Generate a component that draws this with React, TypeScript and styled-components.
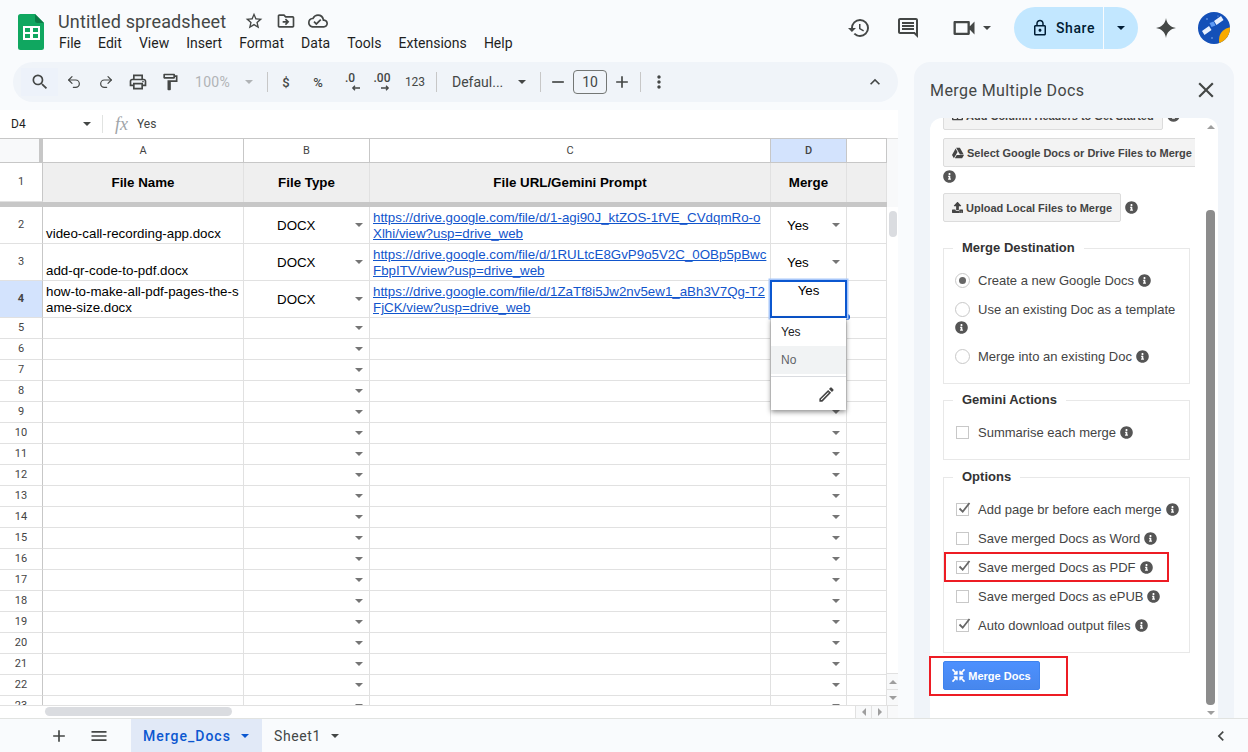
import React from "react";
import styled, { createGlobalStyle } from "styled-components";
import {
  MdAdd,
  MdChevronLeft,
  MdClose,
  MdExpandLess,
  MdHistory,
  MdMenu,
  MdMoreVert,
  MdOutlineCloudDone,
  MdOutlineComment,
  MdOutlineDriveFileMove,
  MdOutlineEdit,
  MdOutlineFormatPaint,
  MdOutlineLock,
  MdOutlinePrint,
  MdOutlineVideocam,
  MdRemove,
  MdSearch,
  MdStarBorder,
} from "react-icons/md";
import { FaCompressArrowsAlt, FaGoogleDrive, FaInfoCircle, FaTable, FaUpload } from "react-icons/fa";
import { Redo2, Undo2 } from "lucide-react";

const GlobalStyle = createGlobalStyle`
  html, body {
    margin: 0;
    padding: 0;
    overflow: hidden;
    background: #f9fbfd;
  }
  * {
    box-sizing: border-box;
  }
`;

const UI_FONT = `Roboto, "Noto Sans", sans-serif`;
const CELL_FONT = `"Liberation Sans", Arial, sans-serif`;

const Page = styled.div`
  position: relative;
  width: 1248px;
  height: 752px;
  display: flex;
  flex-direction: column;
  background: #f9fbfd;
  color: #444746;
  font-family: ${UI_FONT};
`;

/* top bar */
const Header = styled.header`
  height: 62px;
  display: flex;
  align-items: flex-start;
  padding-left: 18px;
`;

const Logo = styled.svg`
  width: 26px;
  height: 36px;
  margin-top: 14px;
`;

const TitleBlock = styled.div`
  margin-left: 14px;
  padding-top: 10px;
`;

const TitleRow = styled.div`
  display: flex;
  align-items: center;
  height: 22px;
  color: #444746;
  font-size: 18px;
  letter-spacing: 0.15px;
`;

const TitleText = styled.span`
  width: 169px;
  white-space: nowrap;
`;

const TitleIcons = styled.div`
  display: flex;
  gap: 12px;
  margin-left: 17px;
  font-size: 20px;
`;

const MenuBar = styled.nav`
  display: flex;
  gap: 17.1px;
  margin: 1px 0 0 1px;
  font-size: 14px;
  line-height: 20px;
  color: #1f1f1f;
`;

const HeaderActions = styled.div`
  margin-left: auto;
  display: flex;
  align-items: center;
  height: 42px;
  margin-top: 7px;
  padding-right: 18px;
`;

const ActionIcon = styled.span<{ $ml?: number; $size?: number }>`
  display: flex;
  font-size: ${(p) => p.$size ?? 24}px;
  margin-left: ${(p) => p.$ml ?? 0}px;
  color: #444746;
`;

const Caret = styled.span<{ $color?: string; $size?: number; $ml?: number; $mr?: number; $auto?: boolean }>`
  flex: none;
  width: 0;
  height: 0;
  border-left: ${(p) => p.$size ?? 4}px solid transparent;
  border-right: ${(p) => p.$size ?? 4}px solid transparent;
  border-top: ${(p) => p.$size ?? 4}px solid ${(p) => p.$color ?? "#444746"};
  margin-left: ${(p) => (p.$auto ? "auto" : `${p.$ml ?? 0}px`)};
  margin-right: ${(p) => p.$mr ?? 0}px;
`;

const ShareGroup = styled.div`
  display: flex;
  height: 42px;
  width: 124px;
  margin-left: 23px;
  border-radius: 21px;
  overflow: hidden;
  background: #c2e7ff;
  color: #001d35;
`;

const ShareMain = styled.div`
  width: 90px;
  display: flex;
  align-items: center;
  padding-left: 17px;
  gap: 7px;
  font-size: 14px;
  font-weight: 500;
  letter-spacing: 0.6px;
  border-right: 1px solid #f9fbfd;
`;

const ShareDrop = styled.div`
  flex: 1;
  display: flex;
  align-items: center;
  justify-content: center;
`;

const Avatar = styled.svg`
  width: 32px;
  height: 32px;
  margin-left: 20px;
`;

/* main area */
const Main = styled.main`
  flex: 1;
  min-height: 0;
  display: flex;
`;

const SheetColumn = styled.section`
  width: 898px;
  display: flex;
  flex-direction: column;
`;

const Toolbar = styled.div`
  height: 40px;
  margin-left: 13px;
  padding: 0 13px 0 8px;
  display: flex;
  align-items: center;
  border-radius: 20px;
  background: #f0f4f9;
  color: #444746;
`;

const ToolButton = styled.div<{ $w?: number; $active?: boolean }>`
  flex: none;
  width: ${(p) => p.$w ?? 32}px;
  height: 28px;
  display: flex;
  align-items: center;
  justify-content: center;
  font-size: 20px;
  background: ${(p) => (p.$active ? "#edf2fa" : "transparent")};
`;

const ToolText = styled.span<{ $size?: number; $weight?: number }>`
  font-family: ${UI_FONT};
  font-size: ${(p) => p.$size ?? 13}px;
  font-weight: ${(p) => p.$weight ?? 400};
`;

const ZoomGroup = styled.div`
  flex: none;
  width: 72px;
  padding-left: 9px;
  display: flex;
  align-items: center;
  color: #b0b3b6;
  font-size: 14px;
  letter-spacing: 0.3px;
`;

const FontGroup = styled.div`
  flex: none;
  width: 88px;
  margin-left: 15px;
  display: flex;
  align-items: center;
  font-size: 14px;
`;

const FontName = styled.span`
  width: 62px;
  white-space: nowrap;
`;

const Divider = styled.span<{ $ml?: number; $mr?: number }>`
  flex: none;
  width: 1px;
  height: 20px;
  background: #c7c7c7;
  margin-left: ${(p) => p.$ml ?? 0}px;
  margin-right: ${(p) => p.$mr ?? 0}px;
`;

const SizeInput = styled.div`
  flex: none;
  width: 34px;
  height: 24px;
  display: flex;
  align-items: center;
  justify-content: center;
  border: 1px solid #747775;
  border-radius: 4px;
  font-size: 14px;
`;

const DecimalStack = styled.span`
  display: flex;
  flex-direction: column;
  align-items: flex-end;
  line-height: 11px;
  font-size: 12px;
  font-weight: 500;
`;

const DecimalArrow = styled.svg<{ $mr?: number }>`
  width: 10px;
  height: 6px;
  margin-top: 1px;
  margin-right: ${(p) => p.$mr ?? 0}px;
`;

const ToolbarEnd = styled.div`
  margin-left: auto;
  display: flex;
  font-size: 20px;
`;

const FormulaBar = styled.div`
  height: 28px;
  margin-top: 8px;
  display: flex;
  align-items: center;
  background: #fff;
  font-size: 12px;
`;

const NameBox = styled.div`
  width: 103px;
  padding: 0 11px 0 11px;
  display: flex;
  align-items: center;
  justify-content: space-between;
  border-right: 1px solid #e1e3e1;
  height: 18px;
  color: #1f1f1f;
`;

const FxMark = styled.span`
  width: 34px;
  padding-left: 12px;
  font-family: "Liberation Serif", serif;
  font-style: italic;
  font-size: 18px;
  color: #a0a4a8;
`;

const GridFrame = styled.div`
  flex: 1;
  min-height: 0;
  display: flex;
  background: #fff;
`;

const GridBody = styled.div`
  width: 887px;
  height: 567px;
  overflow: hidden;
  border-top: 1px solid #c7c7c7;
`;

const GridRow = styled.div<{ $h: number }>`
  display: grid;
  grid-template-columns: 43px 201px 126px 401px 76px 40px;
  height: ${(p) => p.$h}px;
`;

const Cell = styled.div`
  position: relative;
  min-width: 0;
  display: flex;
  border-right: 1px solid #e1e1e1;
  border-bottom: 1px solid #e1e1e1;
  font-family: ${CELL_FONT};
  font-size: 13.33px;
  line-height: 16px;
  color: #000;
`;

const Corner = styled.div`
  background: #f8f9fa;
  border-right: 4px solid #c7c7c7;
  border-bottom: 1px solid #c7c7c7;
`;

const ColHead = styled(Cell)<{ $active?: boolean }>`
  align-items: center;
  justify-content: center;
  font-family: ${UI_FONT};
  font-size: 11px;
  color: #444;
  border-right-color: #c7c7c7;
  border-bottom-color: #c7c7c7;
  background: ${(p) => (p.$active ? "#d3e3fd" : "#fff")};
  font-weight: ${(p) => (p.$active ? 500 : 400)};
`;

const RowHead = styled(Cell)<{ $active?: boolean }>`
  align-items: center;
  justify-content: center;
  font-family: ${UI_FONT};
  font-size: 11px;
  color: #444;
  border-right-color: #c7c7c7;
  background: ${(p) => (p.$active ? "#d3e3fd" : "#fff")};
  font-weight: ${(p) => (p.$active ? 700 : 400)};
`;

const TitleCell = styled(Cell)`
  align-items: center;
  justify-content: center;
  background: #efefef;
  border-bottom: none;
  font-weight: 700;
`;

const FreezeBand = styled.div`
  height: 5px;
  background: #c7c7c7;
`;

const NameCell = styled(Cell)<{ $top?: boolean }>`
  align-items: ${(p) => (p.$top ? "flex-start" : "flex-end")};
  padding: ${(p) => (p.$top ? "3px" : "0")} 2px 1px 3px;
  word-break: break-all;
`;

const ChipCell = styled(Cell)<{ $pad?: number }>`
  align-items: center;
  padding-left: ${(p) => p.$pad ?? 0}px;
`;

const ChipText = styled.span`
  padding-top: 2px;
`;

const LinkCell = styled(Cell)`
  display: block;
  padding: 3px 3px 0;
  white-space: nowrap;
`;

const SheetLink = styled.a`
  display: block;
  color: #1155cc;
  text-decoration: underline;
`;

const SelectedBox = styled.div`
  position: absolute;
  z-index: 3;
  left: -1px;
  top: -1px;
  width: 77px;
  height: 38px;
  padding-top: 1px;
  text-align: center;
  background: #fff;
  border: 2px solid #0b57d0;
  box-shadow: 0 0 0 1.5px #a8c7fa;
`;

const FillHandle = styled.span`
  position: absolute;
  z-index: 2;
  right: -4px;
  bottom: -3px;
  width: 6px;
  height: 6px;
  border-radius: 50%;
  background: #0b57d0;
`;

const DropMenu = styled.div`
  position: absolute;
  z-index: 4;
  left: 0;
  top: 37px;
  width: 75px;
  height: 92px;
  background: #fff;
  font-size: 12px;
  box-shadow: 0 2px 5px rgba(0, 0, 0, 0.45);
`;

const DropItem = styled.div<{ $hover?: boolean }>`
  height: 28px;
  padding-left: 10px;
  display: flex;
  align-items: center;
  color: ${(p) => (p.$hover ? "#5f6368" : "#202124")};
  background: ${(p) => (p.$hover ? "#f1f3f4" : "#fff")};
`;

const DropFoot = styled.div`
  margin-top: 2px;
  height: 34px;
  padding: 2px 10px 0 0;
  display: flex;
  align-items: center;
  justify-content: flex-end;
  border-top: 1px solid #dadce0;
  font-size: 19px;
  color: #444;
`;

const VScroll = styled.div`
  width: 11px;
  display: flex;
  flex-direction: column;
  border-top: 1px solid #e1e1e1;
`;

const VScrollHead = styled.div`
  height: 68px;
  background: #f8f9fa;
`;

const VThumb = styled.div`
  margin: 4px 0 0 2px;
  width: 8px;
  height: 26px;
  border-radius: 4px;
  background: #dadce0;
`;

const VArrows = styled.div`
  margin-top: auto;
  display: flex;
  flex-direction: column;
`;

const ScrollStep = styled.div`
  height: 16px;
  display: flex;
  align-items: center;
  justify-content: center;
  background: #f8f9fa;
  border-top: 1px solid #e1e1e1;
`;

const ArrowUp = styled.span<{ $color?: string; $size?: number }>`
  width: 0;
  height: 0;
  border-left: ${(p) => p.$size ?? 4}px solid transparent;
  border-right: ${(p) => p.$size ?? 4}px solid transparent;
  border-bottom: ${(p) => p.$size ?? 4}px solid ${(p) => p.$color ?? "#9e9e9e"};
`;

const ArrowSide = styled.span<{ $dir: "left" | "right" }>`
  width: 0;
  height: 0;
  border-top: 4px solid transparent;
  border-bottom: 4px solid transparent;
  ${(p) => (p.$dir === "left" ? "border-right" : "border-left")}: 4px solid #9e9e9e;
`;

const HScroll = styled.div`
  height: 13px;
  display: flex;
  align-items: stretch;
  background: #fff;
  border-top: 1px solid #e1e1e1;
`;

const HThumb = styled.div`
  width: 187px;
  height: 9px;
  margin: 1px 0 0 45px;
  border-radius: 5px;
  background: #dadce0;
`;

const HStep = styled.div<{ $first?: boolean }>`
  width: 16px;
  margin-left: ${(p) => (p.$first ? "auto" : "0")};
  display: flex;
  align-items: center;
  justify-content: center;
  background: #f8f9fa;
  border-left: 1px solid #e1e1e1;
`;

const HCorner = styled.div`
  width: 11px;
  background: #f8f9fa;
  border-left: 1px solid #e1e1e1;
`;

/* add-on panel */
const SidePanel = styled.aside`
  width: 320px;
  margin: 0 14px 0 16px;
  padding: 0 16px;
  display: flex;
  flex-direction: column;
  border-radius: 16px 16px 0 0;
  background: #f0f4f9;
`;

const PanelHead = styled.div`
  height: 56px;
  display: flex;
  align-items: center;
  justify-content: space-between;
  font-size: 16px;
  letter-spacing: 0.42px;
  color: #444746;
`;

const CloseButton = styled.span`
  display: flex;
  font-size: 26px;
  margin-right: -1px;
`;

const PanelBody = styled.div`
  flex: 1;
  min-height: 0;
  display: flex;
  padding-right: 3px;
  border-radius: 12px 12px 0 0;
  background: #fff;
  overflow: hidden;
`;

const PanelContent = styled.div`
  width: 265px;
  margin-right: 11px;
  margin-top: -17px;
  padding-left: 13px;
  overflow: hidden;
  font-family: ${CELL_FONT};
  font-size: 13px;
  color: #444;
`;

const ButtonRow = styled.div`
  display: flex;
  align-items: center;
  white-space: nowrap;
  margin-bottom: 8px;
`;

const AddonButton = styled.div`
  flex: none;
  height: 29px;
  padding: 0 8px;
  display: flex;
  align-items: center;
  gap: 3px;
  border: 1px solid #dcdcdc;
  border-radius: 2px;
  background: #f3f3f3;
  font-size: 11px;
  font-weight: 700;
  color: #444;
`;

const InfoIcon = styled(FaInfoCircle)<{ $ml?: number }>`
  flex: none;
  width: 13px;
  height: 13px;
  color: #555;
  margin-left: ${(p) => p.$ml ?? 4}px;
`;

const WrappedInfo = styled.div<{ $top: number; $bottom: number }>`
  display: flex;
  height: 14px;
  margin: ${(p) => p.$top}px 0 ${(p) => p.$bottom}px;
`;

const Group = styled.fieldset<{ $h: number; $mt: number }>`
  width: 247px;
  height: ${(p) => p.$h}px;
  margin: ${(p) => p.$mt}px 0 0;
  padding: 11px 0 0 11px;
  border: 1px solid #e8e8e8;
  min-inline-size: 0;
`;

const GroupTitle = styled.legend`
  margin-left: -2px;
  padding: 0 9px;
  font-size: 13px;
  line-height: 14px;
  font-weight: 700;
  color: #333;
`;

const OptionRow = styled.div`
  display: flex;
  align-items: center;
  height: 29px;
  white-space: nowrap;
`;

const RadioMark = styled.span<{ $on?: boolean }>`
  flex: none;
  width: 15px;
  height: 15px;
  margin-right: 8px;
  display: flex;
  align-items: center;
  justify-content: center;
  border: 1px solid #c8c8c8;
  border-radius: 50%;
  &::after {
    content: "";
    width: 7px;
    height: 7px;
    border-radius: 50%;
    background: ${(p) => (p.$on ? "#666" : "transparent")};
  }
`;

const CheckMark = styled.span`
  flex: none;
  position: relative;
  width: 13px;
  height: 13px;
  margin: 0 9px 0 1px;
  border: 1px solid #c8c8c8;
`;

const CheckTick = styled.svg`
  position: absolute;
  left: 0;
  top: -4px;
  width: 15px;
  height: 15px;
`;

const MergeRow = styled.div`
  margin-top: 8px;
`;

const MergeButton = styled.div`
  width: 97px;
  height: 29px;
  display: flex;
  align-items: center;
  justify-content: center;
  gap: 3px;
  border: 1px solid #3f83ee;
  border-radius: 2px;
  background: linear-gradient(#4d90fe, #4787ed);
  color: #fff;
  font-size: 11px;
  font-weight: 700;
`;

const RedBox = styled.div<{ $x: number; $y: number; $w: number; $h: number }>`
  position: absolute;
  left: ${(p) => p.$x}px;
  top: ${(p) => p.$y}px;
  width: ${(p) => p.$w}px;
  height: ${(p) => p.$h}px;
  border: 2px solid #ed1c24;
  pointer-events: none;
`;

const PanelScroll = styled.div`
  width: 9px;
  display: flex;
  flex-direction: column;
  align-items: center;
`;

const PanelArrowTop = styled.div`
  display: flex;
  height: 4px;
  margin-top: 7px;
`;

const PanelThumb = styled.div`
  width: 9px;
  height: 495px;
  margin-top: 81px;
  border-radius: 4px;
  background: #8c8c8c;
`;

const PanelArrowBottom = styled.span`
  margin-top: 6px;
  width: 0;
  height: 0;
  border-left: 4px solid transparent;
  border-right: 4px solid transparent;
  border-top: 4px solid #9e9e9e;
`;

/* footer */
const Footer = styled.footer`
  height: 34px;
  display: flex;
  align-items: center;
  padding-left: 49px;
  border-top: 1px solid #e1e3e1;
  font-size: 14px;
`;

const FooterIcon = styled.span<{ $ml?: number }>`
  display: flex;
  font-size: 20px;
  margin-left: ${(p) => p.$ml ?? 0}px;
`;

const SheetTab = styled.div<{ $active?: boolean; $w: number; $ml?: number }>`
  width: ${(p) => p.$w}px;
  height: 33px;
  margin-left: ${(p) => p.$ml ?? 0}px;
  padding-left: 12px;
  display: flex;
  align-items: center;
  letter-spacing: ${(p) => (p.$active ? 1 : 0.6)}px;
  font-weight: ${(p) => (p.$active ? 500 : 400)};
  color: ${(p) => (p.$active ? "#0b57d0" : "#444746")};
  background: ${(p) => (p.$active ? "#e1e9f7" : "transparent")};
`;

const FooterEnd = styled.span`
  margin-left: auto;
  margin-right: 17px;
  display: flex;
  font-size: 20px;
`;

type DataRow = {
  n: number;
  name: string;
  url: [string, string];
  merge: string;
  selected?: boolean;
};

const rows: DataRow[] = [
  {
    n: 2,
    name: "video-call-recording-app.docx",
    url: ["https://drive.google.com/file/d/1-agi90J_ktZOS-1fVE_CVdqmRo-o", "Xlhi/view?usp=drive_web"],
    merge: "Yes",
  },
  {
    n: 3,
    name: "add-qr-code-to-pdf.docx",
    url: ["https://drive.google.com/file/d/1RULtcE8GvP9o5V2C_0OBp5pBwc", "FbpITV/view?usp=drive_web"],
    merge: "Yes",
  },
  {
    n: 4,
    name: "how-to-make-all-pdf-pages-the-same-size.docx",
    url: ["https://drive.google.com/file/d/1ZaTf8i5Jw2nv5ew1_aBh3V7Qg-T2", "FjCK/view?usp=drive_web"],
    merge: "Yes",
    selected: true,
  },
];

const emptyRows = Array.from({ length: 19 }, (_, i) => i + 5);
const menus = ["File", "Edit", "View", "Insert", "Format", "Data", "Tools", "Extensions", "Help"];

const Info = ({ ml }: { ml?: number }) => <InfoIcon $ml={ml} />;

const Radio = ({ on, label, info = true }: { on?: boolean; label: string; info?: boolean }) => (
  <OptionRow>
    <RadioMark $on={on} />
    {label}
    {info && <Info />}
  </OptionRow>
);

const Check = ({ on, label }: { on?: boolean; label: string }) => (
  <OptionRow>
    <CheckMark>
      {on && (
        <CheckTick viewBox="0 0 15 15">
          <path d="M2.5 8.5l3.2 3.2L12.5 3" fill="none" stroke="#666" strokeWidth="1.8" />
        </CheckTick>
      )}
    </CheckMark>
    {label}
    <Info />
  </OptionRow>
);

const SheetsLogo = () => (
  <Logo viewBox="0 0 26 36">
    <path d="M2.5 0H17l9 9v24.5a2.5 2.5 0 0 1-2.5 2.5h-21A2.5 2.5 0 0 1 0 33.5v-31A2.5 2.5 0 0 1 2.5 0z" fill="#10a760" />
    <path d="M17 0l9 9h-6.5A2.5 2.5 0 0 1 17 6.5z" fill="#0a7b46" />
    <path d="M5 12h17v14H5z" fill="#fff" />
    <path d="M7 14h5v4H7zM15 14h5v4h-5zM7 20h5v4H7zM15 20h5v4h-5z" fill="#10a760" />
  </Logo>
);

const AvatarArt = () => (
  <Avatar viewBox="0 0 32 32">
    <defs>
      <clipPath id="avatar-clip">
        <circle cx="16" cy="16" r="16" />
      </clipPath>
    </defs>
    <g clipPath="url(#avatar-clip)">
      <rect width="32" height="32" fill="#1450b8" />
      <circle cx="34" cy="28" r="13" fill="#f9ab00" />
      <path d="M4 19l7-5 2.5 4-7 5zM16 9l7-5 2.5 4-7 5z" fill="#e8f0fe" />
      <path d="M11.5 11l4-1.5 2 4-4 1.5z" fill="#5f9bf5" />
      <circle cx="9" cy="7" r="0.8" fill="#8ab4f8" />
      <circle cx="20" cy="4" r="0.6" fill="#8ab4f8" />
      <circle cx="14" cy="26" r="0.8" fill="#8ab4f8" />
    </g>
  </Avatar>
);

export default function App() {
  return (
    <Page>
      <GlobalStyle />
      <Header>
        <SheetsLogo />
        <TitleBlock>
          <TitleRow>
            <TitleText>Untitled spreadsheet</TitleText>
            <TitleIcons>
              <MdStarBorder />
              <MdOutlineDriveFileMove />
              <MdOutlineCloudDone />
            </TitleIcons>
          </TitleRow>
          <MenuBar>
            {menus.map((m) => (
              <span key={m}>{m}</span>
            ))}
          </MenuBar>
        </TitleBlock>
        <HeaderActions>
          <ActionIcon>
            <MdHistory />
          </ActionIcon>
          <ActionIcon $ml={25}>
            <MdOutlineComment />
          </ActionIcon>
          <ActionIcon $ml={30} $size={28}>
            <MdOutlineVideocam />
          </ActionIcon>
          <Caret $ml={5} />
          <ShareGroup>
            <ShareMain>
              <MdOutlineLock size={18} />
              Share
            </ShareMain>
            <ShareDrop>
              <Caret $color="#001d35" />
            </ShareDrop>
          </ShareGroup>
          <ActionIcon $ml={16}>
            <svg width="24" height="24" viewBox="0 0 24 24">
              <path d="M12 2c.6 5.4 4.6 9.4 10 10-5.4.6-9.4 4.6-10 10-.6-5.4-4.6-9.4-10-10 5.4-.6 9.4-4.6 10-10z" fill="#444746" />
            </svg>
          </ActionIcon>
          <AvatarArt />
        </HeaderActions>
      </Header>

      <Main>
        <SheetColumn>
          <Toolbar>
            <ToolButton $w={37} $active>
              <MdSearch />
            </ToolButton>
            <ToolButton>
              <Undo2 size={16} strokeWidth={1.8} />
            </ToolButton>
            <ToolButton>
              <Redo2 size={16} strokeWidth={1.8} />
            </ToolButton>
            <ToolButton>
              <MdOutlinePrint />
            </ToolButton>
            <ToolButton>
              <MdOutlineFormatPaint />
            </ToolButton>
            <ZoomGroup>
              100%
              <Caret $color="#b0b3b6" $ml={15} />
            </ZoomGroup>
            <Divider $ml={9} $mr={2} />
            <ToolButton>
              <ToolText $weight={500}>$</ToolText>
            </ToolButton>
            <ToolButton>
              <ToolText $weight={500}>%</ToolText>
            </ToolButton>
            <ToolButton>
              <DecimalStack>
                .0
                <DecimalArrow viewBox="0 0 10 6" $mr={-6}>
                  <path d="M9 3H2M4 .8L1.8 3 4 5.2" fill="none" stroke="#444746" strokeWidth="1.3" />
                </DecimalArrow>
              </DecimalStack>
            </ToolButton>
            <ToolButton>
              <DecimalStack>
                .00
                <DecimalArrow viewBox="0 0 10 6">
                  <path d="M1 3h7M6 .8L8.2 3 6 5.2" fill="none" stroke="#444746" strokeWidth="1.3" />
                </DecimalArrow>
              </DecimalStack>
            </ToolButton>
            <ToolButton $w={34}>
              <ToolText $size={12}>123</ToolText>
            </ToolButton>
            <Divider $ml={4} />
            <FontGroup>
              <FontName>Defaul...</FontName>
              <Caret $ml={4} />
            </FontGroup>
            <Divider $mr={2} />
            <ToolButton $w={30}>
              <MdRemove />
            </ToolButton>
            <SizeInput>10</SizeInput>
            <ToolButton $w={30}>
              <MdAdd />
            </ToolButton>
            <Divider $ml={3} $mr={3} />
            <ToolButton $w={30}>
              <MdMoreVert />
            </ToolButton>
            <ToolbarEnd>
              <MdExpandLess />
            </ToolbarEnd>
          </Toolbar>

          <FormulaBar>
            <NameBox>
              D4
              <Caret $color="#444746" />
            </NameBox>
            <FxMark>fx</FxMark>
            Yes
          </FormulaBar>

          <GridFrame>
            <GridBody>
              <GridRow $h={24}>
                <Corner />
                <ColHead>A</ColHead>
                <ColHead>B</ColHead>
                <ColHead>C</ColHead>
                <ColHead $active>D</ColHead>
                <ColHead />
              </GridRow>
              <GridRow $h={39}>
                <RowHead>1</RowHead>
                <TitleCell>File Name</TitleCell>
                <TitleCell>File Type</TitleCell>
                <TitleCell>File URL/Gemini Prompt</TitleCell>
                <TitleCell>Merge</TitleCell>
                <TitleCell />
              </GridRow>
              <FreezeBand />
              {rows.map((r) => (
                <GridRow $h={37} key={r.n}>
                  <RowHead $active={r.selected}>{r.n}</RowHead>
                  <NameCell $top={r.selected}>{r.name}</NameCell>
                  <ChipCell $pad={33}>
                    <ChipText>DOCX</ChipText>
                    <Caret $color="#757575" $auto $mr={6} />
                  </ChipCell>
                  <LinkCell>
                    <SheetLink>{r.url[0]}</SheetLink>
                    <SheetLink>{r.url[1]}</SheetLink>
                  </LinkCell>
                  {r.selected ? (
                    <Cell>
                      <SelectedBox>{r.merge}</SelectedBox>
                      <FillHandle />
                      <DropMenu>
                        <DropItem>Yes</DropItem>
                        <DropItem $hover>No</DropItem>
                        <DropFoot>
                          <MdOutlineEdit />
                        </DropFoot>
                      </DropMenu>
                    </Cell>
                  ) : (
                    <ChipCell $pad={16}>
                      <ChipText>{r.merge}</ChipText>
                      <Caret $color="#757575" $auto $mr={6} />
                    </ChipCell>
                  )}
                  <Cell />
                </GridRow>
              ))}
              {emptyRows.map((n) => (
                <GridRow $h={21} key={n}>
                  <RowHead>{n}</RowHead>
                  <Cell />
                  <ChipCell>
                    <Caret $color="#757575" $auto $mr={6} />
                  </ChipCell>
                  <Cell />
                  <ChipCell>
                    <Caret $color="#757575" $auto $mr={6} />
                  </ChipCell>
                  <Cell />
                </GridRow>
              ))}
            </GridBody>
            <VScroll>
              <VScrollHead />
              <VThumb />
              <VArrows>
                <ScrollStep>
                  <ArrowUp />
                </ScrollStep>
                <ScrollStep>
                  <Caret $color="#9e9e9e" />
                </ScrollStep>
              </VArrows>
            </VScroll>
          </GridFrame>
          <HScroll>
            <HThumb />
            <HStep $first>
              <ArrowSide $dir="left" />
            </HStep>
            <HStep>
              <ArrowSide $dir="right" />
            </HStep>
            <HCorner />
          </HScroll>
        </SheetColumn>

        <SidePanel>
          <PanelHead>
            Merge Multiple Docs
            <CloseButton>
              <MdClose />
            </CloseButton>
          </PanelHead>
          <PanelBody>
            <PanelContent>
              <ButtonRow>
                <AddonButton>
                  <FaTable size={11} />
                  Add Column Headers to Get Started
                </AddonButton>
                <Info ml={4} />
              </ButtonRow>
              <ButtonRow>
                <AddonButton>
                  <FaGoogleDrive size={12} />
                  Select Google Docs or Drive Files to Merge
                </AddonButton>
              </ButtonRow>
              <WrappedInfo $top={-5} $bottom={9}>
                <Info ml={0} />
              </WrappedInfo>
              <ButtonRow>
                <AddonButton>
                  <FaUpload size={11} />
                  Upload Local Files to Merge
                </AddonButton>
                <Info ml={4} />
              </ButtonRow>

              <Group $h={143} $mt={19}>
                <GroupTitle>Merge Destination</GroupTitle>
                <Radio on label="Create a new Google Docs" />
                <Radio label="Use an existing Doc as a template" info={false} />
                <WrappedInfo $top={-3} $bottom={7}>
                  <Info ml={0} />
                </WrappedInfo>
                <Radio label="Merge into an existing Doc" />
              </Group>
              <Group $h={67} $mt={9}>
                <GroupTitle>Gemini Actions</GroupTitle>
                <Check label="Summarise each merge" />
              </Group>
              <Group $h={183} $mt={10}>
                <GroupTitle>Options</GroupTitle>
                <Check on label="Add page br before each merge" />
                <Check label="Save merged Docs as Word" />
                <Check on label="Save merged Docs as PDF" />
                <Check label="Save merged Docs as ePUB" />
                <Check on label="Auto download output files" />
              </Group>
              <MergeRow>
                <MergeButton>
                  <FaCompressArrowsAlt size={13} />
                  Merge Docs
                </MergeButton>
              </MergeRow>
            </PanelContent>
            <PanelScroll>
              <PanelArrowTop>
                <ArrowUp />
              </PanelArrowTop>
              <PanelThumb />
              <PanelArrowBottom />
            </PanelScroll>
          </PanelBody>
        </SidePanel>
      </Main>

      <Footer>
        <FooterIcon>
          <MdAdd />
        </FooterIcon>
        <FooterIcon $ml={20}>
          <MdMenu />
        </FooterIcon>
        <SheetTab $active $w={131} $ml={22}>
          Merge_Docs
          <Caret $color="#0b57d0" $ml={10} />
        </SheetTab>
        <SheetTab $w={90}>
          Sheet1
          <Caret $ml={10} />
        </SheetTab>
        <FooterEnd>
          <MdChevronLeft />
        </FooterEnd>
      </Footer>
      <RedBox $x={944} $y={552} $w={225} $h={30} />
      <RedBox $x={929} $y={656} $w={139} $h={40} />
    </Page>
  );
}
